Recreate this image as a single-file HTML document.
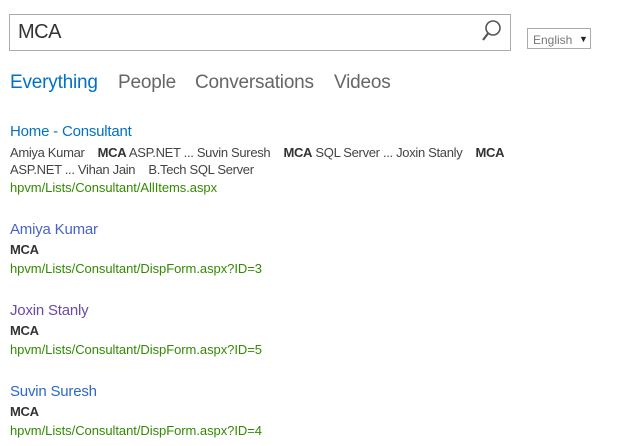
<!DOCTYPE html>
<html><head><meta charset="utf-8"><style>
body{margin:0;width:618px;height:446px;background:#fff;font-family:"Liberation Sans",sans-serif;position:relative;overflow:hidden;color:#444}
.a{position:absolute;white-space:nowrap}
.box{position:absolute;left:9px;top:14px;width:500px;height:35px;border:1px solid #ababab}
.dd{position:absolute;left:527px;top:28px;width:62px;height:19px;border:1px solid #ababab;font-size:12px;color:#777}
.t{font-size:13px;letter-spacing:-0.32px}
.g{color:#338a00;font-size:13px;letter-spacing:-0.05px}
.h{font-size:15px;letter-spacing:-0.2px}
b{color:#333}
</style></head><body>
<div class="box"></div>
<div class="a" style="left:18px;top:21px;font-size:20px;color:#333;letter-spacing:-0.5px">MCA</div>
<svg class="a" style="left:478px;top:18px" width="26" height="26" viewBox="0 0 26 26"><circle cx="15" cy="10" r="7" fill="none" stroke="#555" stroke-width="1.6"/><line x1="10" y1="15.5" x2="5" y2="22" stroke="#555" stroke-width="2.2"/></svg>
<div class="dd"><span style="position:absolute;left:5px;top:4px">English</span><span style="position:absolute;left:51px;top:5px;font-size:9px;color:#222">▼</span></div>
<div class="a" style="left:10px;top:72px;font-size:19px;color:#0072c6;letter-spacing:-0.2px">Everything</div>
<div class="a" style="left:118px;top:72px;font-size:19px;color:#666;letter-spacing:-0.2px">People</div>
<div class="a" style="left:195px;top:72px;font-size:19px;color:#666;letter-spacing:-0.2px">Conversations</div>
<div class="a" style="left:334px;top:72px;font-size:19px;color:#666;letter-spacing:-0.2px">Videos</div>
<div class="a h" style="left:10px;top:123px;color:#0072c6">Home - Consultant</div>
<div class="a t" style="left:10px;top:145px">Amiya Kumar &nbsp;&nbsp; <b>MCA</b> ASP.NET ... Suvin Suresh &nbsp;&nbsp; <b>MCA</b> SQL Server ... Joxin Stanly &nbsp;&nbsp; <b>MCA</b></div>
<div class="a t" style="left:10px;top:162px">ASP.NET ... Vihan Jain &nbsp;&nbsp; B.Tech SQL Server</div>
<div class="a g" style="left:10px;top:180px">hpvm/Lists/Consultant/AllItems.aspx</div>
<div class="a h" style="left:10px;top:221px;color:#4a62c8">Amiya Kumar</div>
<div class="a t" style="left:10px;top:242px"><b>MCA</b></div>
<div class="a g" style="left:10px;top:261px">hpvm/Lists/Consultant/DispForm.aspx?ID=3</div>
<div class="a h" style="left:10px;top:302px;color:#6a4aa8">Joxin Stanly</div>
<div class="a t" style="left:10px;top:323px"><b>MCA</b></div>
<div class="a g" style="left:10px;top:342px">hpvm/Lists/Consultant/DispForm.aspx?ID=5</div>
<div class="a h" style="left:10px;top:383px;color:#2a6ac8">Suvin Suresh</div>
<div class="a t" style="left:10px;top:404px"><b>MCA</b></div>
<div class="a g" style="left:10px;top:423px">hpvm/Lists/Consultant/DispForm.aspx?ID=4</div>
</body></html>
